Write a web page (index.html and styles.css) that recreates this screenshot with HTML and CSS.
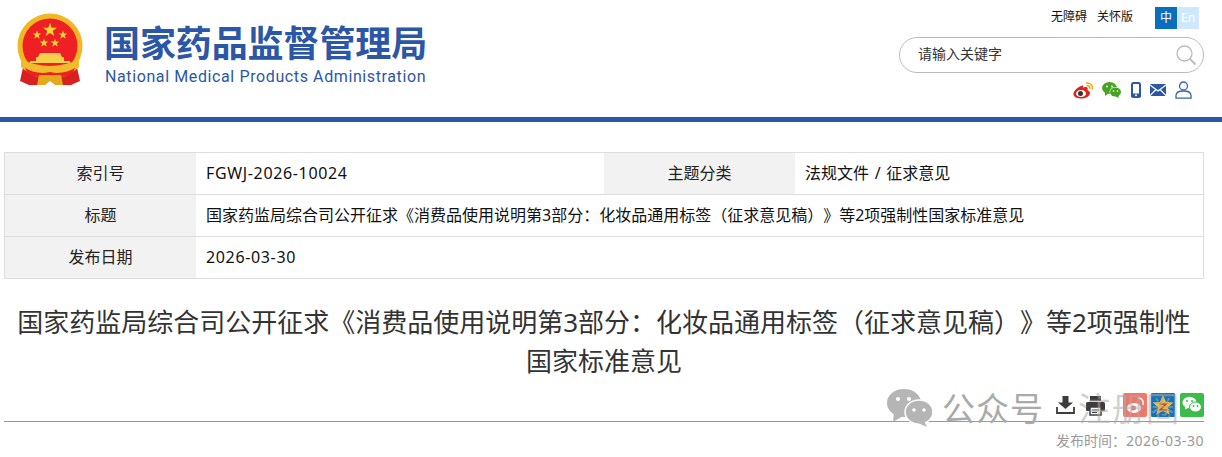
FILE: index.html
```html
<!DOCTYPE html>
<html lang="zh-CN">
<head>
    <meta charset="UTF-8">
    <title>国家药品监督管理局</title>
    <link rel="stylesheet" href="styles.css">
</head>
<body>
    <!-- 页头 -->
    <div class="header">
        <div class="logo">
            <svg class="emblem" width="66" height="74" viewBox="0 0 66 74">
                <defs>
                    <polygon id="star" points="0,-4.500 1.100,-1.400 4.300,-1.400 1.700,.6 2.700,3.700 0,1.800 -2.700,3.700 -1.700,.6 -4.300,-1.400 -1.100,-1.400" fill="#fbd532"/>
                </defs>
                <path d="M7 50 L3 68 L12 72 L24 72 L24 58 Z" fill="#d8201f"/>
                <path d="M59 50 L63 68 L54 72 L42 72 L42 58 Z" fill="#d8201f"/>
                <circle cx="33" cy="33" r="32.500" fill="#f2b824"/>
                <circle cx="33" cy="33" r="27.500" fill="#ee2024"/>
                <path d="M4 46 Q18 53 33 53 Q48 53 62 46 L62 54 Q50 66 33 66 Q16 66 4 54 Z" fill="#f0bc2c"/>
                <path d="M23 40 H43 L45 44 H47 V48 H19 V44 H21 Z" fill="#f7cf4a"/>
                <path d="M13 48 H53 V50 H13 Z" fill="#f7cf4a"/>
                <path d="M8 55 Q20 62 33 59 Q46 62 58 55 L56 60 Q44 66 33 64 Q22 66 10 60 Z" fill="#ee2024"/>
                <path d="M22 62 H44 L46 72 H38 L33 68 L28 72 H20 Z" fill="#e8a81c"/>
                <use href="#star" transform="translate(33 17) scale(1.600)"/>
                <use href="#star" transform="translate(20 22)"/>
                <use href="#star" transform="translate(46 22)"/>
                <use href="#star" transform="translate(27 30)"/>
                <use href="#star" transform="translate(38 30)"/>
            </svg>
            <div class="logo-text">
                <div class="logo-cn">国家药品监督管理局</div>
                <div class="logo-en">National Medical Products Administration</div>
            </div>
        </div>
        <div class="header-right">
            <div class="top-links">
                <a>无障碍</a>
                <a>关怀版</a>
                <div class="lang">
                    <span class="lang-on">中</span>
                    <span class="lang-off">En</span>
                </div>
            </div>
            <div class="search">
                <span>请输入关键字</span>
                <svg width="22" height="22" viewBox="0 0 22 22" fill="none" stroke="#bbb" stroke-width="1.300">
                    <circle cx="9.500" cy="9.500" r="7.500"/>
                    <path d="M15 15 L20.500 20.500" stroke-width="1.800"/>
                </svg>
            </div>
            <div class="media-icons">
                <svg class="icon-weibo" width="21" height="17" viewBox="0 0 21 17">
                    <path d="M8 4 C3.500 6 0 9.500 .5 12.500 C1 15.500 5 16.500 8.500 16.500 C13 16.500 17 14 17 11 C17 9 15 8.500 14.500 8 C15 6.500 15 4.500 12 5 C10.500 5.500 10 5.500 10 5 C10.500 3.500 9.500 3 8 4 Z" fill="#e2231a"/>
                    <ellipse cx="8" cy="11.500" rx="5" ry="3.600" fill="#fff"/>
                    <circle cx="7.500" cy="11.500" r="2.500" fill="#333"/>
                    <path d="M13 1 C17 .5 20 3.500 19.500 7.500 M13.500 3.500 C15.500 3.200 17.200 5 16.800 7" fill="none" stroke="#f0a800" stroke-width="1.500"/>
                </svg>
                <svg width="20" height="16" viewBox="0 0 20 16">
                    <ellipse cx="7.500" cy="6" rx="7.500" ry="6" fill="#45a420"/>
                    <path d="M3 10 L3 14 L7 11 Z" fill="#45a420"/>
                    <ellipse cx="13.500" cy="10" rx="6" ry="5" fill="#fff"/>
                    <ellipse cx="13.500" cy="10" rx="5.500" ry="4.600" fill="#45a420"/>
                    <path d="M16 13 L17 16 L13 14 Z" fill="#45a420"/>
                    <circle cx="5" cy="4.500" r="1" fill="#fff"/>
                    <circle cx="10" cy="4.500" r="1" fill="#fff"/>
                    <circle cx="11.500" cy="9" r=".8" fill="#fff"/>
                    <circle cx="15.500" cy="9" r=".8" fill="#fff"/>
                </svg>
                <svg width="10" height="16" viewBox="0 0 10 16">
                    <rect x="1" y="1" width="8" height="14" rx="1.500" fill="#fff" stroke="#2b57a6" stroke-width="2"/>
                    <rect x="0" y="11.500" width="10" height="3.500" fill="#2b57a6"/>
                    <circle cx="5" cy="13.200" r="1" fill="#fff"/>
                </svg>
                <svg width="16" height="12" viewBox="0 0 16 12">
                    <rect width="16" height="12" rx="1" fill="#2b57a6"/>
                    <path d="M0 1 L8 7 L16 1 M0 11.500 L6 5.500 M16 11.500 L10 5.500" fill="none" stroke="#fff" stroke-width="1.200"/>
                </svg>
                <svg width="17" height="18" viewBox="0 0 17 18" fill="none" stroke="#3a62ad" stroke-width="1.300">
                    <circle cx="8.500" cy="5" r="4"/>
                    <path d="M1 17.200 V14.500 C1 11.500 4 10 8.500 10 C13 10 16 11.500 16 14.500 V17.200 Z"/>
                </svg>
            </div>
        </div>
    </div>
    <div class="blue-bar"></div>

    <!-- 信息表 -->
    <table class="info-table">
        <tr>
            <th>索引号</th>
            <td class="col-a num">FGWJ-2026-10024</td>
            <th>主题分类</th>
            <td class="topic">法规文件 / 征求意见</td>
        </tr>
        <tr>
            <th>标题</th>
            <td colspan="3">国家药监局综合司公开征求《消费品使用说明第3部分：化妆品通用标签（征求意见稿）》等2项强制性国家标准意见</td>
        </tr>
        <tr>
            <th>发布日期</th>
            <td class="num" colspan="3">2026-03-30</td>
        </tr>
    </table>

    <h1 class="title">国家药监局综合司公开征求《消费品使用说明第3部分：化妆品通用标签（征求意见稿）》等2项强制性国家标准意见</h1>

    <!-- 分享 -->
    <div class="share">
        <svg class="share-download" width="19" height="18" viewBox="0 0 19 18">
            <path d="M6.500 0 H12.500 V6.500 H17 L9.500 13 L2 6.500 H6.500 Z" fill="#3c3c3c"/>
            <path d="M1 11 V17 H18 V11" fill="none" stroke="#3c3c3c" stroke-width="1.800"/>
        </svg>
        <svg class="share-print" width="19" height="20" viewBox="0 0 19 20">
            <rect x="4" y="0" width="11" height="5" fill="#3c3c3c"/>
            <rect x="0" y="6" width="19" height="9" rx="1.500" fill="#3c3c3c"/>
            <rect x="4" y="11" width="11" height="8" fill="#fff" stroke="#3c3c3c" stroke-width="1.500"/>
            <path d="M6 14 H13 M6 16.500 H11" stroke="#3c3c3c"/>
        </svg>
        <svg width="24" height="24" viewBox="0 0 24 24">
            <rect width="24" height="24" rx="2" fill="#f2766a"/>
            <ellipse cx="11" cy="15" rx="7" ry="5" fill="#fff"/>
            <circle cx="10.500" cy="15" r="2.500" fill="#f2766a"/>
            <path d="M15 5 C19 5 21 8 20 12" fill="none" stroke="#fff" stroke-width="1.500"/>
        </svg>
        <svg width="24" height="24" viewBox="0 0 24 24">
            <rect width="24" height="24" rx="1" fill="#1272bd"/>
            <polygon points="12,2 15,9 22.500,9.500 16.800,14.300 18.700,21.800 12,17.800 5.300,21.800 7.200,14.300 1.500,9.500 9,9" fill="#f5c22c"/>
            <path d="M8.500 11 H15 L9 17 H16" fill="none" stroke="#c8421e" stroke-width="1.500"/>
        </svg>
        <svg class="share-wechat" width="24" height="24" viewBox="0 0 24 24">
            <rect width="24" height="24" rx="2" fill="#3cbc4a"/>
            <ellipse cx="9.500" cy="9.500" rx="7" ry="5.800" fill="#fff"/>
            <path d="M5.500 13 L5 16.500 L9 14.500 Z" fill="#fff"/>
            <ellipse cx="15.500" cy="14" rx="6" ry="5" fill="#fff" stroke="#3cbc4a"/>
            <circle cx="7" cy="8" r="1" fill="#3cbc4a"/>
            <circle cx="12" cy="8" r="1" fill="#3cbc4a"/>
            <circle cx="13.500" cy="13" r=".9" fill="#3cbc4a"/>
            <circle cx="17.500" cy="13" r=".9" fill="#3cbc4a"/>
        </svg>
    </div>
    <div class="pub-time">发布时间：<span class="pub-date">2026-03-30</span></div>

    <!-- 公众号水印 -->
    <div class="watermark">
        <svg width="46" height="38" viewBox="0 0 46 38">
            <ellipse cx="17" cy="14" rx="17" ry="14" fill="#b5b5b5"/>
            <path d="M7 23 L6 33 L16 27 Z" fill="#b5b5b5"/>
            <ellipse cx="32" cy="23" rx="14" ry="12" fill="#b5b5b5" stroke="#fff" stroke-width="1.500"/>
            <path d="M37 32 L40 38 L31 34 Z" fill="#b5b5b5"/>
            <circle cx="11" cy="10" r="2" fill="#fff"/>
            <circle cx="22" cy="10" r="2" fill="#fff"/>
            <circle cx="27" cy="21" r="1.800" fill="#fff"/>
            <circle cx="37" cy="21" r="1.800" fill="#fff"/>
        </svg>
        <span class="wm-a">公众号</span>
        <span class="wm-b">注册圈</span>
    </div>
</body>
</html>
```

FILE: styles.css
```css
body {
    margin: 0;
    background-color: #fff;
    color: #222;
    font-family: "Noto Sans", "Noto Sans CJK SC", "Liberation Sans", sans-serif;
    text-spacing-trim: space-all;
    position: relative;
    overflow: hidden;
}
.header {
    height: 117px;
    display: flex;
    justify-content: space-between;
    box-sizing: border-box;
    padding: 0 18px 0 17px;
}
.logo {
    display: flex;
    gap: 21px;
    padding-top: 13px;
}
.logo-cn {
    color: #2b57a6;
    font-family: "Noto Sans CJK SC", sans-serif;
    font-size: 36px;
    font-weight: 700;
    line-height: 44px;
    letter-spacing: -.1px;
    margin-top: 6px;
    white-space: nowrap;
}
.logo-en {
    color: #2b57a6;
    font-family: Roboto, "Liberation Sans", sans-serif;
    font-size: 16px;
    line-height: 20px;
    letter-spacing: .61px;
    margin-top: 4px;
    padding-left: 1px;
    white-space: nowrap;
}
.header-right {
    width: 305px;
    padding-top: 7px;
}
.top-links {
    display: flex;
    align-items: flex-start;
    font-size: 12px;
    line-height: 20px;
    color: #111;
    height: 22px;
}
.top-links a {
    margin-right: 10px;
    position: relative;
    left: 152px;
}
.lang {
    display: flex;
    margin-left: auto;
    margin-right: 5px;
    font-size: 12px;
    line-height: 21px;
    text-align: center;
}
.lang span {
    width: 22px;
    height: 22px;
}
.lang-on {
    background-color: #0b6ebd;
    color: #fff;
}
.lang-off {
    background-color: #cfe8fd;
    color: #fff;
}
.search {
    margin-top: 8px;
    height: 36px;
    box-sizing: border-box;
    border: 1px solid #bbb;
    border-radius: 18px;
    display: flex;
    align-items: center;
    justify-content: space-between;
    padding: 0 6px 0 18px;
    font-size: 14px;
    line-height: 32px;
    color: #333;
}
.search span {
    margin-top: -2px;
}
.media-icons {
    display: flex;
    align-items: center;
    justify-content: flex-end;
    gap: 9px;
    margin-top: 7px;
    height: 20px;
    padding-right: 12px;
}
.icon-weibo {
    margin-right: -1px;
}
.blue-bar {
    height: 5px;
    background-color: #2b57a6;
}
.info-table {
    width: 1200px;
    margin: 30px 0 0 4px;
    border-collapse: collapse;
    table-layout: fixed;
    font-size: 16px;
    border: 1px solid #ddd;
}
.info-table th,
.info-table td {
    height: 40px;
    padding: 0 0 1px;
    border-top: 1px solid #ddd;
    border-bottom: 1px solid #ddd;
    line-height: 22px;
}
.info-table th {
    width: 191px;
    background-color: #f2f2f2;
    font-weight: 400;
    text-align: center;
}
.info-table td {
    padding-left: 10px;
    color: #111;
}
.info-table td.col-a {
    width: 398px;
}
.info-table td.num {
    letter-spacing: .65px;
}
.info-table td.topic {
    word-spacing: 1.5px;
}
.title {
    width: 1184px;
    margin: 24px 0 0 4px;
    padding: 0 8px;
    font-size: 26px;
    font-weight: 400;
    line-height: 39px;
    text-align: center;
    color: #333;
}
.share {
    margin: 10px 0 0 4px;
    height: 28px;
    border-bottom: 1px solid #999;
    width: 1200px;
    display: flex;
    justify-content: flex-end;
    gap: 4px;
    padding-top: 2px;
}
.share-download {
    margin: 3px 7px 0 0;
}
.share-print {
    margin: 3px 14px 0 0;
}
.share-wechat {
    margin-left: 1px;
}
.pub-time {
    width: 1200px;
    margin: 10px 0 0 4px;
    text-align: right;
    font-size: 14px;
    line-height: 17px;
    color: #999;
}
.pub-date {
    letter-spacing: .5px;
}
.watermark {
    position: absolute;
    left: 887px;
    top: 388px;
    display: flex;
    align-items: center;
    color: #aaa;
    font-size: 33px;
    line-height: 38px;
    letter-spacing: 1px;
}
.wm-a,
.wm-b {
    padding-top: 2px;
}
.wm-a {
    margin-left: 9px;
}
.wm-b {
    margin-left: 34px;
    opacity: .55;
}
```
